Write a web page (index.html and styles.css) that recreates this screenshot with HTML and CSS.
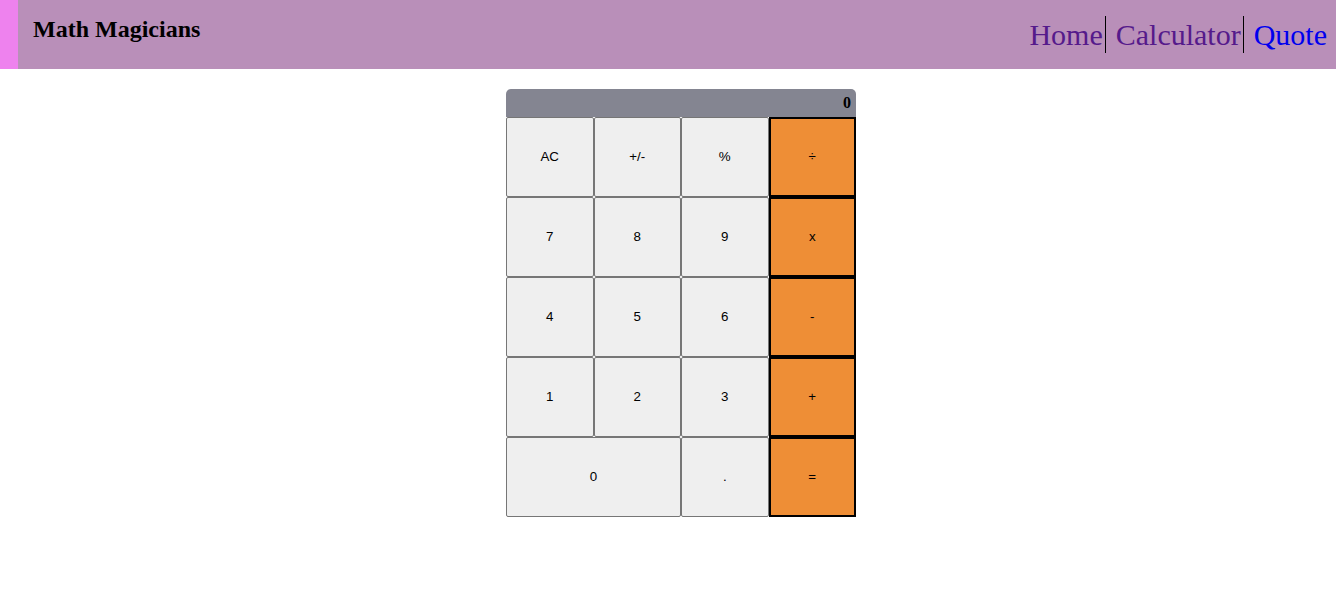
FILE: index.html
```html
<!DOCTYPE html>
<html>
<head>
<meta charset="utf-8">
<title>Math Magicians</title>
<link rel="stylesheet" href="styles.css">
</head>
<body>
<header class="header">
  <h1 class="logo">Math Magicians</h1>
  <ul class="nav">
    <li class="nav-item"><a class="nav-link visited" href="#">Home</a></li>
    <li class="nav-item"><a class="nav-link visited" href="#">Calculator</a></li>
    <li class="nav-item last"><a class="nav-link" href="#">Quote</a></li>
  </ul>
</header>
<main class="main">
  <div class="calc">
    <div class="display">0</div>
    <div class="keys">
      <button class="key">AC</button>
      <button class="key">+/-</button>
      <button class="key">%</button>
      <button class="key op">÷</button>
      <button class="key">7</button>
      <button class="key">8</button>
      <button class="key">9</button>
      <button class="key op">x</button>
      <button class="key">4</button>
      <button class="key">5</button>
      <button class="key">6</button>
      <button class="key op">-</button>
      <button class="key">1</button>
      <button class="key">2</button>
      <button class="key">3</button>
      <button class="key op">+</button>
      <button class="key wide">0</button>
      <button class="key">.</button>
      <button class="key op">=</button>
    </div>
  </div>
</main>
</body>
</html>
```

FILE: styles.css
```css
* { box-sizing: border-box; }
body {
  margin: 0;
  font-family: "Liberation Serif", "Times New Roman", serif;
  background: #fff;
}
.header {
  display: flex;
  justify-content: space-between;
  align-items: flex-start;
  height: 69px;
  background: #b98fb9;
  border-left: 18px solid #ee82ee;
}
.logo {
  margin: 0;
  padding: 16px 0 0 15px;
  font-size: 24px;
  font-weight: bold;
  color: #000;
  line-height: normal;
}
.nav {
  display: flex;
  list-style: none;
  margin: 16px 0 0 0;
  padding: 0 9px 0 0;
}
.nav-item {
  font-size: 30px;
  line-height: 37px;
  height: 37px;
  border-right: 1px solid #000;
  padding-right: 2px;
  margin-right: 10px;
}
.nav-item.last {
  border-right: none;
  padding-right: 0;
  margin-right: 0;
}
.nav-link {
  color: #0000ee;
  text-decoration: none;
}
.nav-link.visited { color: #551a8b; }
.main {
  display: flex;
  justify-content: center;
  padding-top: 20px;
  padding-left: 26px;
}
.calc {
  width: 350px;
}
.display {
  height: 28px;
  background: #848591;
  border-radius: 5px 5px 0 0;
  text-align: right;
  font-weight: bold;
  font-size: 16px;
  line-height: 28px;
  padding-right: 5px;
  color: #000;
}
.keys {
  display: grid;
  grid-template-columns: repeat(4, 1fr);
  grid-auto-rows: 80px;
}
.key {
  margin: 0;
  font-family: "Liberation Sans", Arial, sans-serif;
  font-size: 13.333px;
  line-height: 14px;
  color: #000;
  background: #efefef;
  border: 1px solid #767676;
  border-radius: 2px;
  padding: 0 0 1px 0;
}
.key.wide { grid-column: span 2; }
.key.op {
  background: #ee8e36;
  border: 2px solid #000;
  border-radius: 0;
}
```
